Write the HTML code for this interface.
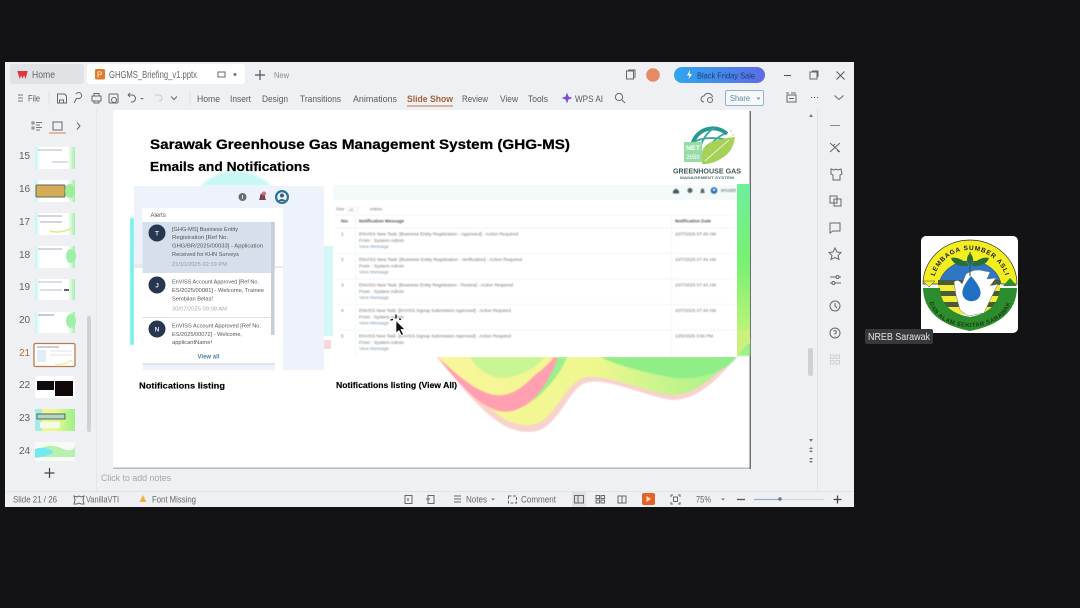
<!DOCTYPE html>
<html lang="en"><head><meta charset="utf-8"><title>GHGMS Briefing</title>
<style>
html,body{margin:0;padding:0;background:#131315;width:1080px;height:608px;overflow:hidden}
svg{display:block;filter:blur(.35px)}
text{font-family:"Liberation Sans",sans-serif}
.r{font-size:9.5px;fill:#5a5b5e}
.n{font-size:10px;fill:#66676a}
.a{font-size:5.8px;fill:#555}
.t{font-size:4.8px;fill:#777}
.l{font-size:4.8px;fill:#7d9ab5}
.h{font-weight:bold;fill:#000}
.i{fill:none;stroke:#66676a;stroke-width:1}
</style></head><body>
<svg width="1080" height="608" viewBox="0 0 1080 608" xmlns="http://www.w3.org/2000/svg">
<defs>
<linearGradient id="pill" x1="0" x2="1"><stop offset="0" stop-color="#2ea6ee"/><stop offset="1" stop-color="#5f6be6"/></linearGradient>
<linearGradient id="thumbc" x1="0" x2="1"><stop offset="0" stop-color="#c5f4f0"/><stop offset=".14" stop-color="#fff"/><stop offset=".82" stop-color="#fff"/><stop offset="1" stop-color="#a5efad"/></linearGradient>
<linearGradient id="green" x1="0" x2="0" y1="0" y2="1"><stop offset="0" stop-color="#6fee9c"/><stop offset=".5" stop-color="#79f172"/><stop offset="1" stop-color="#c8f27a"/></linearGradient>
<linearGradient id="wave" x1="0" x2="1"><stop offset="0" stop-color="#f9f59b"/><stop offset=".5" stop-color="#eef78e"/><stop offset="1" stop-color="#9bf08a"/></linearGradient>
<path id="arcTop" d="M933 287A37 37 0 0 1 1007 287"/>
<path id="arcBot" d="M929 298A41 29 0 0 0 1011 298"/>
</defs>

<rect width="1080" height="608" fill="#131315"/>
<rect x="5" y="62" width="849" height="445" fill="#eff0f3"/>

<!-- tabs -->
<rect x="10" y="64" width="74" height="20" rx="3" fill="#e1e2e6"/>
<path d="M18 71.500h9l-1.500 6-1.500-3.500-1.500 3.500-1.500-3.500-1.200 3.500z" fill="#d8383f" stroke="#d8383f" stroke-width="1"/>
<text x="32" y="78" class="n" textLength="23" lengthAdjust="spacingAndGlyphs">Home</text>
<rect x="87" y="64" width="158" height="20" rx="3" fill="#fff"/>
<rect x="95" y="69" width="10" height="10.500" rx="1.500" fill="#e37b28"/>
<text x="97" y="77.500" font-size="8" fill="#fff">P</text>
<text x="109" y="78" class="n" textLength="88" lengthAdjust="spacingAndGlyphs">GHGMS_Briefing_v1.pptx</text>
<rect x="218" y="72" width="7" height="5" class="i"/><circle cx="235" cy="74.500" r="1.500" fill="#777"/>
<path d="M260 70v10M255 75h10" stroke="#555" stroke-width="1.200"/>
<text x="274" y="78" font-size="8.500" fill="#8a8b8e" textLength="15" lengthAdjust="spacingAndGlyphs">New</text>
<rect x="626.500" y="71" width="7" height="8" class="i" stroke-width="1.300"/><path d="M628 70h7v8" class="i"/>
<circle cx="653" cy="75" r="6.800" fill="#e58a63"/>
<rect x="674" y="67" width="91" height="16" rx="8" fill="url(#pill)"/>
<path d="M690 70l-3 5.500h2.500l-1 4 3.500-5.500h-2.500z" fill="#fff"/>
<text x="697" y="78.500" font-size="8.500" fill="#173f73" textLength="58" lengthAdjust="spacingAndGlyphs">Black Friday Sale</text>
<path d="M784 75.500h7" stroke="#555"/><rect x="810" y="72" width="7" height="7" class="i"/><path d="M812 71h6v6" class="i"/>
<path d="M836.500 71.500l8 8M844.500 71.500l-8 8" stroke="#555"/>

<!-- ribbon -->
<path d="M18 95h5M18 98h5M18 101h5" stroke="#777"/>
<text x="28" y="101.500" class="r" textLength="12" lengthAdjust="spacingAndGlyphs">File</text>
<path d="M49 91v14" stroke="#dedfe2"/>
<path d="M57.500 94h7l2 2v7h-9z" class="i"/><path d="M59.500 103v-3h4v3" class="i"/>
<path d="M76 94a3 3 0 1 1 2.500 4.500h-2L74 103" class="i"/>
<rect x="92" y="96" width="9" height="5" class="i"/><path d="M94 96v-2.500h5V96M94 101v2h5v-2" class="i"/>
<rect x="109" y="94" width="9" height="9" rx="1" class="i"/><circle cx="114" cy="100" r="2.500" class="i"/>
<path d="M128 95h4a3 3 0 0 1 0 7h-1M128 95l2-2M128 95l2 2" class="i"/><path d="M140 98l2 1.500 2-1.500" fill="#666"/>
<path d="M155 95h4a3 3 0 0 1 0 6" fill="none" stroke="#c8c9cc"/><path d="M171 96.500l3 3 3-3" class="i"/>
<path d="M190 91v14" stroke="#dedfe2"/>
<g class="r">
<text x="197" y="102" textLength="23" lengthAdjust="spacingAndGlyphs">Home</text>
<text x="230" y="102" textLength="21" lengthAdjust="spacingAndGlyphs">Insert</text>
<text x="262" y="102" textLength="26" lengthAdjust="spacingAndGlyphs">Design</text>
<text x="300" y="102" textLength="41" lengthAdjust="spacingAndGlyphs">Transitions</text>
<text x="353" y="102" textLength="44" lengthAdjust="spacingAndGlyphs">Animations</text>
<text x="462" y="102" textLength="26" lengthAdjust="spacingAndGlyphs">Review</text>
<text x="500" y="102" textLength="18" lengthAdjust="spacingAndGlyphs">View</text>
<text x="528" y="102" textLength="20" lengthAdjust="spacingAndGlyphs">Tools</text>
<text x="575" y="102" textLength="28" lengthAdjust="spacingAndGlyphs">WPS AI</text>
</g>
<text x="407" y="102" font-size="9.500" font-weight="bold" fill="#a0623a" textLength="46" lengthAdjust="spacingAndGlyphs">Slide Show</text>
<rect x="407" y="105.500" width="46" height="1" fill="#c9794a"/>
<path d="M567 92.500l1.500 4 4 1.500-4 1.500-1.500 4-1.500-4-4-1.500 4-1.500z" fill="#7d50d8"/>
<circle cx="619" cy="97" r="3.600" class="i"/><path d="M622 100l3 3" class="i"/>
<path d="M704 102a3 3 0 0 1 0-6 4.500 4.500 0 0 1 8.500 1" class="i"/><circle cx="710" cy="100" r="2.500" class="i"/>
<rect x="725.500" y="90.500" width="38" height="15" rx="1.500" fill="#f7f8fa" stroke="#8fb3cc"/>
<text x="730" y="101" font-size="8.500" fill="#5d8aaa" textLength="20" lengthAdjust="spacingAndGlyphs">Share</text>
<path d="M757 97.500l1.500 1.500 1.500-1.500" stroke="#6a8ea8" fill="none"/>
<rect x="787" y="95" width="9" height="7" class="i"/><path d="M786 93h3M791 93h5M789 98.500h5" class="i"/>
<path d="M811 97.500h1M814 97.500h1M817 97.500h1" stroke="#555"/>
<path d="M834.500 95.500l4.500 4 4.500-4" class="i"/>

<!-- left panel -->
<path d="M96.500 110v381" stroke="#e4e5e8"/>
<path d="M32 122h2v2h-2zM32 127h2v2h-2zM36 122.500h6M36 125h4M36 127.500h6M36 130h4" stroke="#77787b" fill="none" stroke-width=".9"/>
<rect x="53" y="122" width="9" height="8" class="i"/><rect x="49" y="132.500" width="17" height="1" fill="#d67e45"/>
<path d="M77 122.500l3 3.500-3 3.500" class="i"/>
<g font-size="10" fill="#5f6063">
<text x="19" y="159">15</text><text x="19" y="192">16</text><text x="19" y="225">17</text><text x="19" y="258">18</text><text x="19" y="290">19</text><text x="19" y="323">20</text><text x="19" y="356" fill="#b06f3e">21</text><text x="19" y="388">22</text><text x="19" y="421">23</text><text x="19" y="454">24</text>
</g>
<rect x="35" y="147" width="40" height="22" fill="url(#thumbc)"/><path d="M38 150h24" stroke="#aab8b8"/><path d="M52 162h16" stroke="#bbc"/>
<rect x="35" y="180" width="40" height="22" fill="url(#thumbc)"/><rect x="36" y="185" width="29" height="12" rx="1" fill="#d4ab56" stroke="#5e6a55"/><ellipse cx="70" cy="191" rx="5" ry="7" fill="#9cef98"/>
<rect x="35" y="213" width="40" height="22" fill="url(#thumbc)"/><path d="M38 216h24M40 222h22" stroke="#aab"/><path d="M50 231q10 3 22-3" stroke="#d8ec80" fill="none" stroke-width="1.500"/>
<rect x="35" y="246" width="40" height="22" fill="url(#thumbc)"/><path d="M38 249h24" stroke="#aab"/><ellipse cx="71" cy="256" rx="5" ry="7" fill="#a0efa8"/>
<rect x="35" y="279" width="40" height="21" fill="url(#thumbc)"/><path d="M38 282h24M40 290h22" stroke="#bbc"/><rect x="64" y="289" width="5" height="2" fill="#567"/>
<rect x="35" y="312" width="40" height="21" fill="url(#thumbc)"/><path d="M38 315h16" stroke="#89a"/><ellipse cx="71" cy="321" rx="5" ry="7" fill="#a0efa8"/>
<rect x="34" y="343.500" width="41" height="23" rx="1.500" fill="#fff" stroke="#b97b4d" stroke-width="1.300"/><path d="M37 347h22" stroke="#99a"/><rect x="37" y="350" width="9" height="12" fill="#e4ecf5"/><path d="M50 351h22M50 355h22" stroke="#dde0e4"/><path d="M55 364q8 2 17-4" stroke="#dcec8c" fill="none"/>
<rect x="35" y="376" width="40" height="22" fill="#fff"/><rect x="37" y="381" width="17" height="9" fill="#0c0c10"/><rect x="55" y="381" width="18" height="15" fill="#100809"/>
<rect x="35" y="409" width="40" height="22" fill="url(#wave)"/><rect x="35" y="409" width="7" height="22" fill="#a5ece6"/><rect x="37" y="414" width="28" height="5" fill="#b6d4c2" stroke="#456b63"/><rect x="40" y="422" width="20" height="6" fill="#f4fbe9"/>
<rect x="35" y="442" width="40" height="19" fill="#f6fbf5"/><path d="M35 452q12-10 26-4t14-4v13H35z" fill="#b9f0ae"/><path d="M35 449q8-3 16 1t-16 8z" fill="#72e9ed"/>
<rect x="87" y="316" width="4" height="116" rx="2" fill="#d0d1d4"/>
<path d="M49.500 468v10M44.500 473h10" stroke="#444" stroke-width="1.200"/>

<!-- scroller and side -->
<path d="M817.500 110v381" stroke="#e2e3e6"/>
<rect x="808" y="348" width="5" height="28" rx="2" fill="#d0d1d4"/>
<g fill="#777"><path d="M811 114l2 3h-4z"/><path d="M809 439h4l-2 3z"/><path d="M809 449l2-2 2 2zM809 452l2-2 2 2z"/><path d="M809 458l2 2 2-2zM809 461l2 2 2-2z"/></g>
<g class="i">
<path d="M830 125.500h10" stroke="#888"/>
<path d="M830 143l10 9M840 143l-10 9M833 146l2-2M837 150l2 2"/>
<path d="M831 169l3 1 2-1 2 1 3-1 1 5-2 1v5h-7v-5l-2-1z"/>
<rect x="830" y="196" width="7" height="7"/><rect x="834" y="199" width="7" height="7"/>
<path d="M830 223h10v8h-7l-3 2z"/>
<path d="M835 248l2 4 4 .5-3 3 1 4-4-2-4 2 1-4-3-3 4-.5z"/>
<path d="M830 277h6M839 277h2M830 283h2M835 283h6"/><circle cx="837.500" cy="277" r="1.500"/><circle cx="833.500" cy="283" r="1.500"/>
<circle cx="835" cy="306" r="5"/><path d="M835 303v3l2 2"/>
<circle cx="835" cy="333" r="5"/><path d="M833.500 331.500a1.500 1.500 0 1 1 1.500 2v1M835 336v.5"/>
</g>
<g fill="none" stroke="#cfd0d3"><rect x="830.500" y="355" width="3.500" height="3.500"/><rect x="836" y="355" width="3.500" height="3.500"/><rect x="830.500" y="360.500" width="3.500" height="3.500"/><rect x="836" y="360.500" width="3.500" height="3.500"/></g>

<!-- slide -->
<rect x="113" y="110" width="636.500" height="359" fill="#b8b9bb"/>
<rect x="749.500" y="111" width="1.500" height="358" fill="#6f7072"/>
<rect x="113" y="110" width="636.500" height="357.500" fill="#fff"/>

<!-- wave -->
<g style="filter:blur(.9px)">
<path d="M436 356H750V340C730 365 705 400 672 400C640 395 605 376 585 383C570 390 565 410 548 425C535 436 515 433 500 423C480 410 460 385 436 356Z" fill="#f8d2cc"/>
<path d="M437 356H750V338C728 362 702 395 672 395C640 391 605 372 583 378C566 386 560 405 545 419C532 429 516 426 503 418C484 406 460 382 437 356Z" fill="url(#wave)"/>
<path d="M470 357H545C535 368 520 378 500 378C485 376 475 365 470 357Z" fill="#c8f594"/>
<path d="M437 357C455 372 470 388 490 394C510 400 525 385 535 375C545 368 550 362 554 357L558 358C550 380 538 400 520 408C505 416 490 410 475 398C460 385 448 370 437 357Z" fill="#ff9fb0"/>
<path d="M558 357H567C560 375 545 392 530 403C545 388 553 372 558 357Z" fill="#9af08c"/>
<path d="M600 357H737C725 372 700 380 675 378C645 373 620 366 600 357Z" fill="#8fee88"/>
</g>
<rect x="737" y="184" width="13" height="160" fill="url(#green)"/>
<path d="M737 330h13v10l-13 17z" fill="#cbf07e"/>
<path d="M200 186Q235 155 272 186Z" fill="#c8f7f4" style="filter:blur(1.2px)"/>
<path d="M130 218h4v127h-4z" fill="#7eefec" style="filter:blur(.5px)"/>
<path d="M324 246h9v90h-9z" fill="#d6f7f7"/>
<rect x="324" y="340" width="7" height="9" fill="#f9d8dd"/>

<!-- title -->
<text x="150" y="149" class="h" font-size="14" stroke="#000" stroke-width=".25" textLength="420" lengthAdjust="spacingAndGlyphs">Sarawak Greenhouse Gas Management System (GHG-MS)</text>
<text x="150" y="171" class="h" font-size="13" stroke="#000" stroke-width=".2" textLength="160" lengthAdjust="spacingAndGlyphs">Emails and Notifications</text>

<!-- logo -->
<path d="M692 146A21 21 0 0 1 727 134" fill="none" stroke="#2a9a8e" stroke-width="4"/>
<path d="M700 150Q702 136 714 128M708 150Q712 140 724 134M692 143Q705 135 727 140" fill="none" stroke="#3aa79e" stroke-width="1.800"/>
<path d="M702 164Q698 146 714 141Q726 138 735 137Q733 152 722 158Q712 165 702 164Z" fill="#a5d158"/>
<path d="M705 161Q715 152 729 140" stroke="#e8f5c8" stroke-width="1" fill="none"/>
<rect x="684" y="142" width="18" height="20" fill="#95dea2"/>
<text x="686" y="150" font-size="6.500" font-weight="bold" fill="#fff" textLength="14" lengthAdjust="spacingAndGlyphs">NET</text>
<text x="686.500" y="159" font-size="6" font-weight="bold" fill="#eef" textLength="13" lengthAdjust="spacingAndGlyphs">2050</text>
<g fill="#d6c868"><circle cx="731" cy="131" r=".8"/><circle cx="733" cy="135" r=".8"/><circle cx="733" cy="140" r=".8"/><circle cx="731" cy="145" r=".8"/></g>
<text x="673" y="173.500" font-size="7.200" font-weight="bold" fill="#3c5a58" textLength="68" lengthAdjust="spacingAndGlyphs">GREENHOUSE GAS</text>
<text x="680" y="179" font-size="3.900" font-weight="bold" fill="#557270" textLength="54" lengthAdjust="spacingAndGlyphs">MANAGEMENT SYSTEM</text>

<!-- notification dropdown -->
<g style="filter:blur(.35px)">
<rect x="134" y="186" width="190" height="184" fill="#eef3fb"/>
<rect x="134" y="268" width="9" height="102" fill="#fff"/>
<rect x="275" y="208" width="8" height="162" fill="#fff"/>
<rect x="134" y="264" width="9" height="4" fill="#e6eaf0"/><rect x="275" y="266" width="8" height="2" fill="#e6eaf0"/>
<circle cx="242.500" cy="197" r="4" fill="#6b6e70"/><rect x="242" y="195" width="1" height="4" fill="#ddd"/>
<path d="M259 200q1-2 1-4a2.500 2.500 0 0 1 5 0q0 2 1 4z" fill="#7b4156"/><circle cx="264" cy="193.500" r="2" fill="#d86a7c"/>
<circle cx="282" cy="197" r="7" fill="#2c7394"/><circle cx="282" cy="197" r="4.800" fill="#eef3fb"/><circle cx="282" cy="195.500" r="2" fill="#38617b"/><path d="M278 201q4-4 8 0" fill="#38617b"/>
<rect x="142.500" y="208" width="132.500" height="156" fill="#fff"/>
<rect x="142.500" y="222" width="132.500" height="51" fill="#d5e0ec"/>
<path d="M142.500 317.500H272" stroke="#dde0e4"/>
<rect x="271" y="222" width="3.500" height="113" fill="#c6ced8"/>
<path d="M142.500 364H275" stroke="#cdd1d6"/>
<text x="150.500" y="217" font-size="6" fill="#555">Alerts</text>
<circle cx="157" cy="233" r="8.500" fill="#26374f"/><text x="157" y="235.500" font-size="6.500" font-weight="bold" text-anchor="middle" fill="#dfe5ee">T</text>
<circle cx="157" cy="285" r="8.500" fill="#26374f"/><text x="157" y="287.500" font-size="6.500" font-weight="bold" text-anchor="middle" fill="#dfe5ee">J</text>
<circle cx="157" cy="329" r="8.500" fill="#26374f"/><text x="157" y="331.500" font-size="6.500" font-weight="bold" text-anchor="middle" fill="#dfe5ee">N</text>
<g class="a">
<text x="172" y="231" textLength="66" lengthAdjust="spacingAndGlyphs">[GHG-MS] Business Entity</text>
<text x="172" y="239" textLength="56" lengthAdjust="spacingAndGlyphs">Registration [Ref No.</text>
<text x="172" y="247.500" textLength="91" lengthAdjust="spacingAndGlyphs">GHG/BR/2025/00033] - Application</text>
<text x="172" y="256" textLength="67" lengthAdjust="spacingAndGlyphs">Received for KHN Surveys</text>
<text x="172" y="266" textLength="55" lengthAdjust="spacingAndGlyphs" style="fill:#959aa0">21/10/2025 02:19 PM</text>
<text x="172" y="283.500" textLength="87" lengthAdjust="spacingAndGlyphs">EnVISS Account Approved [Ref No.</text>
<text x="172" y="292" textLength="92" lengthAdjust="spacingAndGlyphs">ES/2025/00081] - Welcome, Trainee</text>
<text x="172" y="300.500" textLength="41" lengthAdjust="spacingAndGlyphs">Sembilan Belas!</text>
<text x="172" y="310.500" textLength="55" lengthAdjust="spacingAndGlyphs" style="fill:#a5a8ac">30/07/2025 09:08 AM</text>
<text x="172" y="327.500" textLength="89" lengthAdjust="spacingAndGlyphs">EnVISS Account Approved [Ref No.</text>
<text x="172" y="336" textLength="70" lengthAdjust="spacingAndGlyphs">ES/2025/00072] - Welcome,</text>
<text x="172" y="344" textLength="40" lengthAdjust="spacingAndGlyphs">applicantName!</text>
</g>
<text x="208.500" y="358.500" font-size="6.500" font-weight="bold" text-anchor="middle" fill="#4f7da4" textLength="22" lengthAdjust="spacingAndGlyphs">View all</text>
</g>
<text x="139" y="388.500" class="h" font-size="8.500" stroke="#000" stroke-width=".15" textLength="86" lengthAdjust="spacingAndGlyphs">Notifications listing</text>

<!-- table panel -->
<rect x="333" y="185" width="404" height="172" fill="#fff"/>
<rect x="333" y="185" width="404" height="15" fill="#f3fbfa"/>
<g style="filter:blur(.4px)">
<path d="M673 191l3-2.500 3 2.500v2.500h-6z" fill="#4a5460"/><circle cx="690" cy="190.500" r="2.500" fill="#596068"/><path d="M700 193q1-1 1-3a1.500 1.500 0 0 1 3 0q0 2 1 3z" fill="#596068"/>
<circle cx="714" cy="190.500" r="3.300" fill="#1f6fb5"/><circle cx="714" cy="190" r="1.200" fill="#fff"/>
<text x="721" y="192" font-size="4.500" fill="#555" textLength="15" lengthAdjust="spacingAndGlyphs">MYUSER</text>
<text x="336" y="210.500" class="t" textLength="8" lengthAdjust="spacingAndGlyphs">Show</text>
<rect x="347" y="207" width="11" height="5" fill="#fff" stroke="#e2e4e6" stroke-width=".5"/><text x="349" y="211" font-size="3.800" fill="#777">10</text>
<text x="370" y="210.500" class="t" textLength="12" lengthAdjust="spacingAndGlyphs">entries</text>
<g stroke="#eceef0" stroke-width=".6">
<path d="M335 215H735M335 228H735M335 253.500H735M335 279H735M335 304.500H735M335 330H735"/>
<path d="M355.500 215V355M671.500 215V355"/>
</g>
<g font-size="4.800" font-weight="bold" fill="#555">
<text x="341" y="222.500" textLength="8" lengthAdjust="spacingAndGlyphs">No.</text>
<text x="359" y="222.500" textLength="45" lengthAdjust="spacingAndGlyphs">Notification Message</text>
<text x="675" y="222.500" textLength="36" lengthAdjust="spacingAndGlyphs">Notification Date</text>
</g>
<g class="t">
<text x="341" y="235.500">1</text><text x="359" y="235.500" textLength="159" lengthAdjust="spacingAndGlyphs">ENVISS New Task: [Business Entity Registration - Approved] - Action Required</text><text x="359" y="242" textLength="45" lengthAdjust="spacingAndGlyphs">From : System Admin</text><text x="675" y="235.500" textLength="41" lengthAdjust="spacingAndGlyphs">10/7/2025 07:49 AM</text>
<text x="341" y="261">2</text><text x="359" y="261" textLength="163" lengthAdjust="spacingAndGlyphs">ENVISS New Task: [Business Entity Registration - Verification] - Action Required</text><text x="359" y="267.500" textLength="45" lengthAdjust="spacingAndGlyphs">From : System Admin</text><text x="675" y="261" textLength="41" lengthAdjust="spacingAndGlyphs">10/7/2025 07:44 AM</text>
<text x="341" y="286.500">3</text><text x="359" y="286.500" textLength="154" lengthAdjust="spacingAndGlyphs">ENVISS New Task: [Business Entity Registration - Review] - Action Required</text><text x="359" y="293" textLength="45" lengthAdjust="spacingAndGlyphs">From : System Admin</text><text x="675" y="286.500" textLength="41" lengthAdjust="spacingAndGlyphs">10/7/2025 07:44 AM</text>
<text x="341" y="312">4</text><text x="359" y="312" textLength="152" lengthAdjust="spacingAndGlyphs">ENVISS New Task: [EnVISS Signup Submission Approved] - Action Required</text><text x="359" y="318.500" textLength="45" lengthAdjust="spacingAndGlyphs">From : System Admin</text><text x="675" y="312" textLength="41" lengthAdjust="spacingAndGlyphs">10/7/2025 07:34 AM</text>
<text x="341" y="337.500">5</text><text x="359" y="337.500" textLength="152" lengthAdjust="spacingAndGlyphs">ENVISS New Task: [EnVISS Signup Submission Approved] - Action Required</text><text x="359" y="344" textLength="45" lengthAdjust="spacingAndGlyphs">From : System Admin</text><text x="675" y="337.500" textLength="38" lengthAdjust="spacingAndGlyphs">10/6/2025 3:56 PM</text>
</g>
<g class="l">
<text x="359" y="248" textLength="30" lengthAdjust="spacingAndGlyphs">View Message</text>
<text x="359" y="273.500" textLength="30" lengthAdjust="spacingAndGlyphs">View Message</text>
<text x="359" y="299" textLength="30" lengthAdjust="spacingAndGlyphs">View Message</text>
<text x="359" y="324.500" textLength="30" lengthAdjust="spacingAndGlyphs">View Message</text>
<text x="359" y="350" textLength="30" lengthAdjust="spacingAndGlyphs">View Message</text>
</g>
</g>
<text x="336" y="388" class="h" font-size="8.500" stroke="#000" stroke-width=".15" textLength="121" lengthAdjust="spacingAndGlyphs">Notifications listing (View All)</text>

<!-- cursor -->
<path d="M396 314.500v4M393 319.500l-2.500 .5M401 319.500l-2-.5" stroke="#000" stroke-width="1.200"/>
<path d="M396 320.500V333l3-2.500 2.500 5 2-1-2.500-5h4z" fill="#111" stroke="#fff" stroke-width=".7"/>

<!-- notes / status -->
<text x="101" y="481" font-size="9" fill="#a5a6a9" textLength="70" lengthAdjust="spacingAndGlyphs">Click to add notes</text>
<path d="M5 491.500H854" stroke="#e2e3e6"/>
<g font-size="9" fill="#66676a">
<text x="13" y="502.500" textLength="44" lengthAdjust="spacingAndGlyphs">Slide 21 / 26</text>
<text x="86" y="502.500" textLength="33" lengthAdjust="spacingAndGlyphs">VanillaVTI</text>
<text x="152" y="502.500" textLength="44" lengthAdjust="spacingAndGlyphs">Font Missing</text>
<text x="466" y="502.500" textLength="21" lengthAdjust="spacingAndGlyphs">Notes</text>
<text x="521" y="502.500" textLength="35" lengthAdjust="spacingAndGlyphs">Comment</text>
<text x="696" y="502.500" textLength="15" lengthAdjust="spacingAndGlyphs">75%</text>
</g>
<path d="M74 496l3 1 2-1 2 1 3-1-1 4 1 4h-3l-2-1-2 1h-3l1-4z" class="i"/>
<path d="M143 495l3.500 7h-7z" fill="#eeb040"/>
<rect x="405" y="495.500" width="7" height="8" class="i"/><path d="M408 498v3" stroke="#555"/>
<rect x="428" y="495.500" width="6" height="8" class="i"/><path d="M426 499h4" class="i"/>
<path d="M454 496h7M454 499h7M454 502h7" class="i"/><path d="M491 498.500l2 2 2-2" fill="#777"/>
<rect x="508.500" y="496" width="8" height="7" stroke-dasharray="3 1.500" class="i"/>
<rect x="572" y="491.500" width="14" height="15.500" fill="#e1e2e5"/><rect x="574.500" y="495.500" width="9" height="7.500" class="i"/><path d="M578 495.500v7.500" class="i"/>
<rect x="596" y="495.500" width="3.500" height="3" class="i"/><rect x="601" y="495.500" width="3.500" height="3" class="i"/><rect x="596" y="500" width="3.500" height="3" class="i"/><rect x="601" y="500" width="3.500" height="3" class="i"/>
<path d="M618 496h4v7h-4zM622 496h4v7h-4z" class="i"/>
<rect x="642" y="493" width="13" height="12" rx="2" fill="#e2622a"/><path d="M646.500 496v6l4.500-3z" fill="#ffe6a8"/>
<path d="M671 497v-2h2M678 495h2v2M680 502v2h-2M673 504h-2v-2" class="i"/><rect x="673.500" y="497" width="4" height="4.500" class="i"/>
<path d="M721 498.500l2 2 2-2" fill="#777"/>
<path d="M737 499.500h8" stroke="#555" stroke-width="1.300"/>
<path d="M754 499.500h26" stroke="#8fb0c8" stroke-width="1.200"/><path d="M780 499.500h44" stroke="#d8d9dc" stroke-width="1.200"/><circle cx="780" cy="499" r="1.800" fill="#777"/>
<path d="M837.500 495.500v8M833.500 499.500h8" stroke="#444" stroke-width="1.300"/>

<!-- participant tile -->
<rect x="921" y="236" width="97" height="97" rx="5" fill="#fff"/>
<path d="M923 284A47 44 0 0 1 1017 284L1001 284A31.500 28 0 0 0 939 284Z" fill="#f2ee22" stroke="#333" stroke-width=".7"/>
<path d="M939 284A31.500 28 0 0 1 1001 284Z" fill="#2f77c4"/>
<rect x="938" y="280" width="62" height="34" fill="#efee35"/>
<g fill="#4b5a3b"><rect x="938" y="280" width="62" height="5"/><rect x="938" y="291" width="62" height="5"/><rect x="938" y="302" width="62" height="5"/></g>
<path d="M923 288H940Q941 312 970 317Q998 312 1000 288H1017Q1016 322 970 331Q924 322 923 288Z" fill="#2c8c2e"/>
<path d="M923 281h12l-6 6z" fill="#efee35" stroke="#444" stroke-width=".5"/>
<path d="M1003 286l7-8 7 8z" fill="#2c8c2e"/>
<path d="M954 282Q958 278 962 284L966 274Q975 268 984 271L990 272L987 279L996 278L990 286L998 284L990 300L984 313L968 316L960 310L956 295Z" fill="#fff" stroke="#777" stroke-width=".5"/>
<path d="M971 276q-11 13-8 20a9.500 9.500 0 0 0 17 0q3-7-9-20z" fill="#2170c4"/>
<path d="M970 276v-24" stroke="#1f5d20"/>
<path d="M970 253q-6 6 0 13 6-7 0-13zM968 264q-10-8-17-6 3 9 17 8zM972 264q10-8 17-6-3 9-17 8z" fill="#2a6e33"/>
<text font-size="6.500" font-weight="bold" fill="#202020" letter-spacing=".8" text-anchor="middle"><textPath href="#arcTop" startOffset="50%">LEMBAGA SUMBER ASLI</textPath></text>
<text font-size="6" font-weight="bold" fill="#1c3a18" letter-spacing=".4" text-anchor="middle"><textPath href="#arcBot" startOffset="50%">DAN ALAM SEKITAR SARAWAK</textPath></text>
<rect x="865" y="329" width="68" height="15" rx="2" fill="#37383a"/>
<text x="868" y="340" font-size="10" fill="#e4e4e6" textLength="62" lengthAdjust="spacingAndGlyphs">NREB Sarawak</text>
</svg>
</body></html>
